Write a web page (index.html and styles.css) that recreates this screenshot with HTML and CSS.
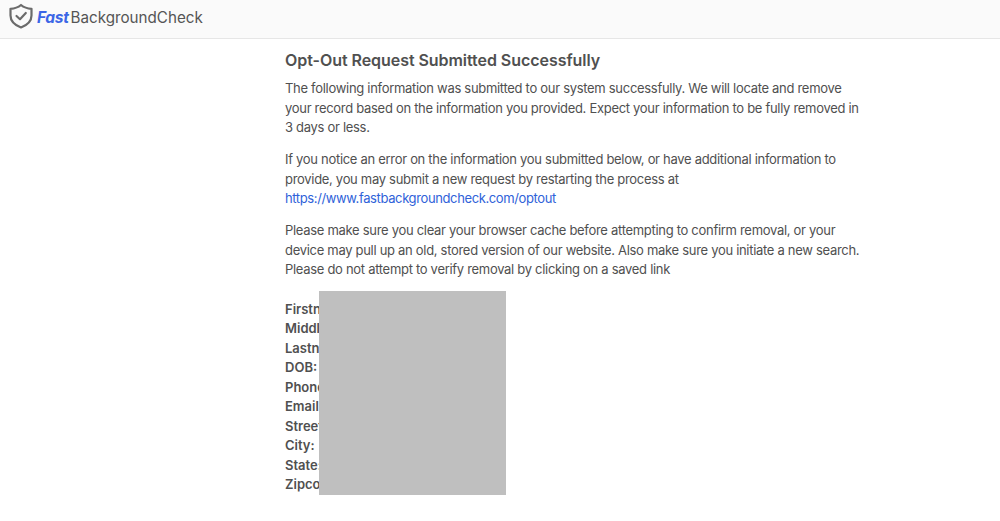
FILE: index.html
```html
<!DOCTYPE html>
<html lang="en">
<head>
  <meta charset="UTF-8">
  <meta name="viewport" content="width=device-width, initial-scale=1.0">
  <title>Opt-Out Request Submitted</title>
  <link rel="stylesheet" href="styles.css">
</head>
<body>
  <header class="topbar">
    <svg class="logo-icon" width="26" height="26" viewBox="0 0 26 26" fill="none" stroke="#6b6b6b">
      <path d="M13 2 C16 4.5 19.5 5.6 23.5 5.8 V12.5 C23.5 18 19.5 22 13 24.5 C6.5 22 2.5 18 2.5 12.5 V5.8 C6.5 5.6 10 4.5 13 2 Z" stroke-width="2.2" stroke-linejoin="round"/>
      <path d="M8.5 13 L12 16.2 L17.8 10" stroke-width="2.2" stroke-linecap="round" stroke-linejoin="round"/>
    </svg>
    <span class="logo-fast">Fast</span><span class="logo-rest">BackgroundCheck</span>
  </header>
  <main class="content">
    <h1>Opt-Out Request Submitted Successfully</h1>
    <p>The following information was submitted to our system successfully. We will locate and remove your record based on the information you provided. Expect your information to be fully removed in 3 days or less.</p>
    <p>If you notice an error on the information you submitted below, or have additional information to provide, you may submit a new request by restarting the process at <a href="#">https://www.fastbackgroundcheck.com/optout</a></p>
    <p>Please make sure you clear your browser cache before attempting to confirm removal, or your device may pull up an old, stored version of our website. Also make sure you initiate a new search. Please do not attempt to verify removal by clicking on a saved link</p>
    <div class="details">
      <div>Firstname:</div>
      <div>Middlename:</div>
      <div>Lastname:</div>
      <div>DOB:</div>
      <div>Phone:</div>
      <div>Email:</div>
      <div>Street:</div>
      <div>City:</div>
      <div>State:</div>
      <div>Zipcode:</div>
      <div class="redact"></div>
    </div>
  </main>
</body>
</html>
```

FILE: styles.css
```css
body {
  font-family: Inter, "Liberation Sans", sans-serif;
  margin: 0;
  padding: 0;
  background-color: #fff;
  color: #505050;
  font-size: 13px;
  letter-spacing: -0.3px;
  line-height: 19.5px;
}
.topbar {
  display: flex;
  align-items: center;
  height: 36px;
  padding: 0 0 2px 8px;
  background-color: #fafafa;
  border-bottom: 1px solid #e6e6e6;
}
.logo-icon {
  margin: 0 3px 4px 0;
}
.logo-fast {
  font-size: 15.5px;
  font-weight: 700;
  font-style: italic;
  color: #3b66e6;
  margin-right: 2px;
}
.logo-rest {
  font-size: 15.2px;
  letter-spacing: 0;
  color: #555;
}
.content {
  width: 580px;
  margin-left: 285px;
}
h1 {
  font-size: 16px;
  line-height: 22px;
  font-weight: 600;
  letter-spacing: -0.05px;
  margin: 10px 0 8px;
}
p {
  margin: 0 0 12.5px;
}
a {
  color: #2f62d9;
  letter-spacing: -0.38px;
  text-decoration: none;
}
.details {
  position: relative;
  font-weight: 600;
  letter-spacing: 0;
  margin-top: 20px;
}
.redact {
  position: absolute;
  left: 34px;
  top: -8.5px;
  width: 187px;
  height: 207px;
  background-color: #bfbfbf;
}
```
